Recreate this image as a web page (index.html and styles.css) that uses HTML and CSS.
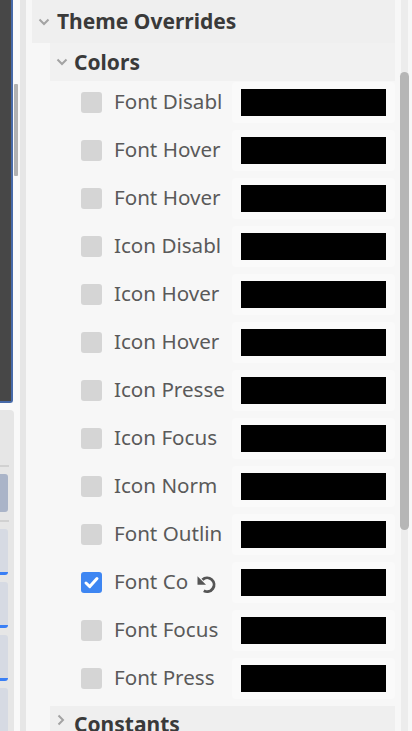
FILE: index.html
```html
<!DOCTYPE html>
<html>
<head>
<meta charset="utf-8">
<link rel="stylesheet" href="styles.css">
</head>
<body>
<div class="left">
  <div class="left-top">
    <div class="viewport"></div>
    <div class="vscroll"><div class="vthumb"></div></div>
  </div>
  <div class="dock">
    <div class="sep"></div>
    <div class="tab-active"></div>
    <div class="sep sep2"></div>
    <div class="tab"></div>
    <div class="tab"></div>
    <div class="tab"></div>
    <div class="tab"></div>
  </div>
</div>
<div class="gutter"></div>
<div class="main">
  <div class="content">
    <div class="section-header">
      <svg class="chev" width="12" height="8" viewBox="0 0 12 8"><polyline points="1.5,1.5 6,6 10.5,1.5" fill="none" stroke="#a3a3a3" stroke-width="2"/></svg>
      <span class="hdr-text">Theme Overrides</span>
    </div>
    <div class="sub">
      <div class="sub-header">
        <svg class="chev" width="12" height="8" viewBox="0 0 12 8"><polyline points="1.5,1.5 6,6 10.5,1.5" fill="none" stroke="#a3a3a3" stroke-width="2"/></svg>
        <span class="hdr-text">Colors</span>
      </div>
      <div class="rows">
        <div class="row"><div class="label"><span class="cb"></span><span class="name">Font Disabl</span></div><div class="swatch"><div class="color"></div></div></div>
        <div class="row"><div class="label"><span class="cb"></span><span class="name">Font Hover</span></div><div class="swatch"><div class="color"></div></div></div>
        <div class="row"><div class="label"><span class="cb"></span><span class="name">Font Hover</span></div><div class="swatch"><div class="color"></div></div></div>
        <div class="row"><div class="label"><span class="cb"></span><span class="name">Icon Disabl</span></div><div class="swatch"><div class="color"></div></div></div>
        <div class="row"><div class="label"><span class="cb"></span><span class="name">Icon Hover</span></div><div class="swatch"><div class="color"></div></div></div>
        <div class="row"><div class="label"><span class="cb"></span><span class="name">Icon Hover</span></div><div class="swatch"><div class="color"></div></div></div>
        <div class="row"><div class="label"><span class="cb"></span><span class="name">Icon Presse</span></div><div class="swatch"><div class="color"></div></div></div>
        <div class="row"><div class="label"><span class="cb"></span><span class="name">Icon Focus</span></div><div class="swatch"><div class="color"></div></div></div>
        <div class="row"><div class="label"><span class="cb"></span><span class="name">Icon Norm</span></div><div class="swatch"><div class="color"></div></div></div>
        <div class="row"><div class="label"><span class="cb"></span><span class="name">Font Outlin</span></div><div class="swatch"><div class="color"></div></div></div>
        <div class="row"><div class="label"><span class="cb checked"><svg width="21" height="21" viewBox="0 0 21 21"><polyline points="5,11 8.8,14.6 16,6.5" fill="none" stroke="#ffffff" stroke-width="3" stroke-linecap="round" stroke-linejoin="round"/></svg></span><span class="name">Font Co</span><svg class="revert" width="22" height="22" viewBox="0 0 16 16"><path d="M5.4 5.6 A5 5 0 1 1 6.4 13.6" fill="none" stroke="#555555" stroke-width="2.1"/><polygon points="1.8,3 1.8,9.2 8,9.2" fill="#555555"/></svg></div><div class="swatch"><div class="color"></div></div></div>
        <div class="row"><div class="label"><span class="cb"></span><span class="name">Font Focus</span></div><div class="swatch"><div class="color"></div></div></div>
        <div class="row"><div class="label"><span class="cb"></span><span class="name">Font Press</span></div><div class="swatch"><div class="color"></div></div></div>
      </div>
      <div class="sub-header closed">
        <svg class="chev" width="12" height="12" viewBox="0 0 12 12"><polyline points="3.5,1.5 8,6 3.5,10.5" fill="none" stroke="#a3a3a3" stroke-width="2"/></svg>
        <span class="hdr-text">Constants</span>
      </div>
    </div>
  </div>
  <div class="scrollbar"><div class="thumb"></div></div>
</div>
</body>
</html>
```
FILE: styles.css
```css
html, body {
  margin: 0;
  padding: 0;
}
body {
  width: 412px;
  height: 731px;
  overflow: hidden;
  display: flex;
  background: #f7f7f7;
  font-family: "Noto Sans", "Open Sans", sans-serif;
}
.left {
  width: 20px;
  display: flex;
  flex-direction: column;
  background: #f9f9f9;
}
.left-top {
  display: flex;
  height: 403px;
}
.viewport {
  width: 11px;
  height: 401px;
  background: #474747;
  border-right: 2px solid #4669a8;
  border-bottom: 2px solid #4669a8;
  border-bottom-right-radius: 3px;
}
.vscroll {
  width: 7px;
}
.vthumb {
  margin-top: 84px;
  margin-left: 1px;
  width: 4px;
  height: 92px;
  background: #b1b1b1;
  border-radius: 1px;
}
.dock {
  margin-top: 7px;
  width: 14px;
  flex: 1;
  background: #e6e6e6;
  border-top-right-radius: 4px;
  padding-top: 55px;
  display: flex;
  flex-direction: column;
  gap: 7px;
}
.sep {
  width: 9px;
  height: 2px;
  background: #d1d1d1;
  flex: none;
}
.sep2 {
  margin-top: 1px;
}
.tab-active {
  width: 8px;
  height: 38px;
  background: #aab4c8;
  border-radius: 0 3px 3px 0;
  flex: none;
}
.tab {
  width: 8px;
  height: 43px;
  background: #d6dae3;
  border-bottom: 3px solid #3a7ff5;
  border-radius: 0 3px 3px 0;
  flex: none;
}
.gutter {
  width: 6px;
  background: #e6e6e6;
}
.main {
  flex: 1;
  display: flex;
  padding-left: 6px;
  background: #f7f7f7;
}
.content {
  width: 363px;
  display: flex;
  flex-direction: column;
}
.section-header {
  height: 43px;
  background: #efefef;
  display: flex;
  align-items: center;
  padding-left: 6px;
  gap: 7px;
  flex: none;
}
.hdr-text {
  font-weight: 700;
  font-size: 21px;
  color: #3a3a3a;
  line-height: 1;
}
.chev {
  flex: none;
}
.sub {
  margin-left: 18px;
  display: flex;
  flex-direction: column;
}
.sub-header {
  height: 38px;
  background: #f1f1f1;
  display: flex;
  align-items: center;
  padding-left: 6px;
  gap: 6px;
  flex: none;
}
.sub-header.closed {
  height: 40px;
  background: #efefef;
  padding-left: 5px;
  gap: 7px;
  align-items: flex-start;
  padding-top: 8px;
  box-sizing: border-box;
}
.rows {
  padding-top: 1px;
  display: flex;
  flex-direction: column;
  gap: 7px;
  padding-bottom: 7px;
}
.row {
  height: 41px;
  display: flex;
}
.label {
  width: 182px;
  display: flex;
  align-items: center;
  padding-left: 31px;
  box-sizing: border-box;
}
.cb {
  width: 21px;
  height: 21px;
  border-radius: 3px;
  background: #d5d5d5;
  flex: none;
  display: flex;
}
.cb.checked {
  background: #3e86f2;
}
.name {
  margin-left: 12px;
  font-size: 20.6px;
  color: #5a5a5a;
  white-space: nowrap;
  line-height: 1;
  padding-bottom: 2px;
}
.revert {
  margin-left: 7px;
  flex: none;
}
.swatch {
  width: 163px;
  background: #fafafa;
  border-radius: 4px;
  padding: 7px 9px;
  box-sizing: border-box;
}
.color {
  height: 27px;
  background: #000000;
}
.scrollbar {
  margin-left: 5px;
  width: 9px;
  display: flex;
  justify-content: center;
  background: linear-gradient(to right, transparent 1px, #ececec 1px, #ececec 8px, transparent 8px);
}
.thumb {
  margin-top: 72px;
  width: 9px;
  height: 458px;
  background: #b6b6b6;
  border-radius: 5px;
}
```
